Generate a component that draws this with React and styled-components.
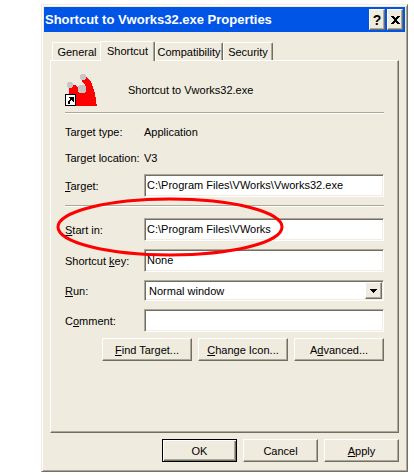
import React from 'react';
import styled, { createGlobalStyle } from 'styled-components';

const face = '#efebde';
const shade = '#aca899';
const dark = '#716f64';

const GlobalStyle = createGlobalStyle`
  * {
    box-sizing: border-box;
  }
  body {
    margin: 0;
    background: #fff;
    color: #000;
    font-family: 'Liberation Sans', Arial, sans-serif;
    font-size: 11px;
    line-height: 14px;
  }
  button, input, select {
    font: inherit;
    color: inherit;
    border-radius: 0;
    outline: none;
  }
`;

const Dialog = styled.main`
  margin: 4px 6px 4px 41px;
  padding: 1px 1px 9px;
  background: ${face};
  border: 1px solid;
  border-color: #f6ebe2 ${dark} ${dark} #f6ebe2;
  box-shadow: inset 1px 1px #fff, inset -1px -1px ${shade};
`;

const TitleBar = styled.header`
  display: flex;
  align-items: center;
  gap: 2px;
  height: 25px;
  margin: 1px 1px 0;
  padding: 0 2px 0 1px;
  background: #0055e7;
  h1 {
    flex: 1;
    margin: 0;
    color: #fff;
    font-size: 13px;
    font-weight: bold;
    white-space: nowrap;
  }
`;

const raised = `
  background: ${face};
  border: 1px solid;
  border-color: #fff ${dark} ${dark} #fff;
  box-shadow: inset -1px -1px ${shade};
`;

const TitleButton = styled.button`
  ${raised}
  display: flex;
  align-items: center;
  justify-content: center;
  width: 16px;
  height: 21px;
  padding: 0;
  font-size: 14px;
  font-weight: bold;
`;

const Tabs = styled.div`
  display: flex;
  align-items: flex-end;
  height: 19px;
  margin: 9px 9px 0;
`;

const Tab = styled.button`
  height: ${props => (props.$active ? 20 : 18)}px;
  width: ${props => props.$width}px;
  margin: ${props => (props.$active ? '0 0 -1px -2px' : 0)};
  padding: ${props => (props.$active ? '0 0 2px' : 0)};
  position: relative;
  z-index: ${props => (props.$active ? 1 : 0)};
  background: ${face};
  border: 1px solid;
  border-color: #fff ${dark} transparent #fff;
  border-bottom: 0;
  border-radius: 2px 2px 0 0;
  box-shadow: inset -1px 0 ${shade};
  white-space: nowrap;
`;

const Panel = styled.section`
  min-height: 373px;
  margin: 0 7px;
  padding: 13px 14px 0;
  border: 1px solid;
  border-color: #fff ${dark} ${dark} #fff;
  box-shadow: inset -1px -1px ${shade};
`;

const Heading = styled.div`
  display: flex;
  align-items: center;
  gap: 31px;
  height: 32px;
`;

const Rule = styled.hr`
  height: 2px;
  margin: ${props => props.$gap};
  border: 0;
  border-top: 1px solid ${shade};
  border-bottom: 1px solid #fff;
`;

const Info = styled.div`
  margin-bottom: 3px;
`;

const Row = styled.div`
  display: grid;
  grid-template-columns: 79px 1fr;
  align-items: center;
  position: relative;
  min-height: ${props => (props.$plain ? 26 : 21)}px;
  margin-bottom: ${props => (props.$plain ? 0 : 8)}px;
`;

const sunken = `
  width: 100%;
  background: #fff;
  border: 1px solid;
  border-color: ${shade} #fff #fff ${shade};
  box-shadow: inset 1px 1px ${dark}, inset -1px -1px #f6ebe2;
`;

const TextBox = styled.input`
  ${sunken}
  height: 23px;
  padding: 0 2px 2px;
`;

const SelectBox = styled.div`
  position: relative;
  height: 21px;
  select {
    ${sunken}
    display: block;
    height: 21px;
    padding: 0 20px 0 4px;
    appearance: none;
  }
`;

const Arrow = styled.span`
  ${raised}
  display: flex;
  align-items: center;
  justify-content: center;
  position: absolute;
  top: 2px;
  right: 2px;
  width: 17px;
  height: 17px;
  pointer-events: none;
`;

const Highlight = styled.svg`
  position: absolute;
  top: -21px;
  left: -10px;
  z-index: 2;
  pointer-events: none;
`;

const Actions = styled.div`
  display: flex;
  justify-content: flex-end;
  gap: 6px;
  margin: ${props => props.$margin};
`;

const Button = styled.button`
  ${raised}
  width: ${props => (props.$wide ? 90 : 75)}px;
  height: 23px;
  padding: 0;
  ${props => props.$primary && `
    border-color: #000;
    box-shadow: inset 1px 1px #fff, inset -1px -1px ${dark}, inset -2px -2px ${shade};
  `}
`;

const AppIcon = () => (
  <svg width="32" height="32" viewBox="0 0 32 32" shapeRendering="crispEdges" aria-hidden="true">
    <path fill="#f00" d="M4 20 V14 L6 11 H10 L13 14 L14 17 H20 V11 L16 7 L20 3 L23 4 L26 8 L28 13 L30 19 L31 27 L32 32 H10 V20 Z" />
    <circle cx="5" cy="11" r="3" fill="#c6c6c6" />
    <circle cx="18" cy="3" r="3" fill="#c6c6c6" />
    <circle cx="17" cy="15" r="4.5" fill="#c6c6c6" />
    <rect x="0" y="20" width="11" height="12" fill="#000" />
    <rect x="1" y="21" width="9" height="10" fill="#fff" />
    <path fill="#000" d="M4 23 H9 V28 H8 V27 H7 V26 H6 V27 H5 V30 H3 V27 H4 V26 H5 V24 H4 Z" />
  </svg>
);

const fields = [
  { id: 'start', label: <><u>S</u>tart in:</>, value: 'C:\\Program Files\\VWorks', marked: true },
  { id: 'key', label: <>Shortcut <u>k</u>ey:</>, value: 'None' },
];

export default function App() {
  return (
    <>
      <GlobalStyle />
      <Dialog>
        <TitleBar>
          <h1>Shortcut to Vworks32.exe Properties</h1>
          <TitleButton aria-label="Help">?</TitleButton>
          <TitleButton aria-label="Close">
            <svg width="9" height="8" viewBox="0 0 9 8" shapeRendering="crispEdges">
              <path d="M0 0h3v1h1v1h1v-1h1v-1h3v1h-1v1h-1v1h-1v2h1v1h1v1h1v1h-3v-1h-1v-1h-1v1h-1v1h-3v-1h1v-1h1v-1h1v-2h-1v-1h-1v-1h-1z" />
            </svg>
          </TitleButton>
        </TitleBar>
        <Tabs role="tablist">
          <Tab role="tab" $width={50}>General</Tab>
          <Tab role="tab" $width={55} $active aria-selected="true">Shortcut</Tab>
          <Tab role="tab" $width={68}>Compatibility</Tab>
          <Tab role="tab" $width={50}>Security</Tab>
        </Tabs>
        <Panel>
          <Heading>
            <AppIcon />
            <span>Shortcut to Vworks32.exe</span>
          </Heading>
          <Rule $gap="6px 0 5px" />
          <Info>
            <Row $plain><span>Target type:</span><span>Application</span></Row>
            <Row $plain><span>Target location:</span><span>V3</span></Row>
          </Info>
          <Row>
            <label htmlFor="target"><u>T</u>arget:</label>
            <TextBox id="target" defaultValue="C:\Program Files\VWorks\Vworks32.exe" />
          </Row>
          <Rule $gap="0 0 11px" />
          {fields.map(field => (
            <Row key={field.id}>
              <label htmlFor={field.id}>{field.label}</label>
              <TextBox id={field.id} defaultValue={field.value} />
              {field.marked && (
                <Highlight width="230" height="60" viewBox="0 0 230 60" aria-hidden="true">
                  <ellipse cx="115" cy="30" rx="112" ry="28" fill="none" stroke="#f00" strokeWidth="3" />
                </Highlight>
              )}
            </Row>
          ))}
          <Row>
            <label htmlFor="run"><u>R</u>un:</label>
            <SelectBox>
              <select id="run">
                <option>Normal window</option>
              </select>
              <Arrow>
                <svg width="7" height="4" viewBox="0 0 7 4" shapeRendering="crispEdges">
                  <path d="M0 0h7v1h-1v1h-1v1h-1v1h-1v-1h-1v-1h-1v-1h-1z" />
                </svg>
              </Arrow>
            </SelectBox>
          </Row>
          <Row>
            <label htmlFor="comment">C<u>o</u>mment:</label>
            <TextBox id="comment" />
          </Row>
          <Actions $margin="-2px 0 0">
            <Button $wide><u>F</u>ind Target...</Button>
            <Button $wide><u>C</u>hange Icon...</Button>
            <Button $wide>A<u>d</u>vanced...</Button>
          </Actions>
        </Panel>
        <Actions $margin="6px 7px 0">
          <Button $primary>OK</Button>
          <Button>Cancel</Button>
          <Button><u>A</u>pply</Button>
        </Actions>
      </Dialog>
    </>
  );
}
